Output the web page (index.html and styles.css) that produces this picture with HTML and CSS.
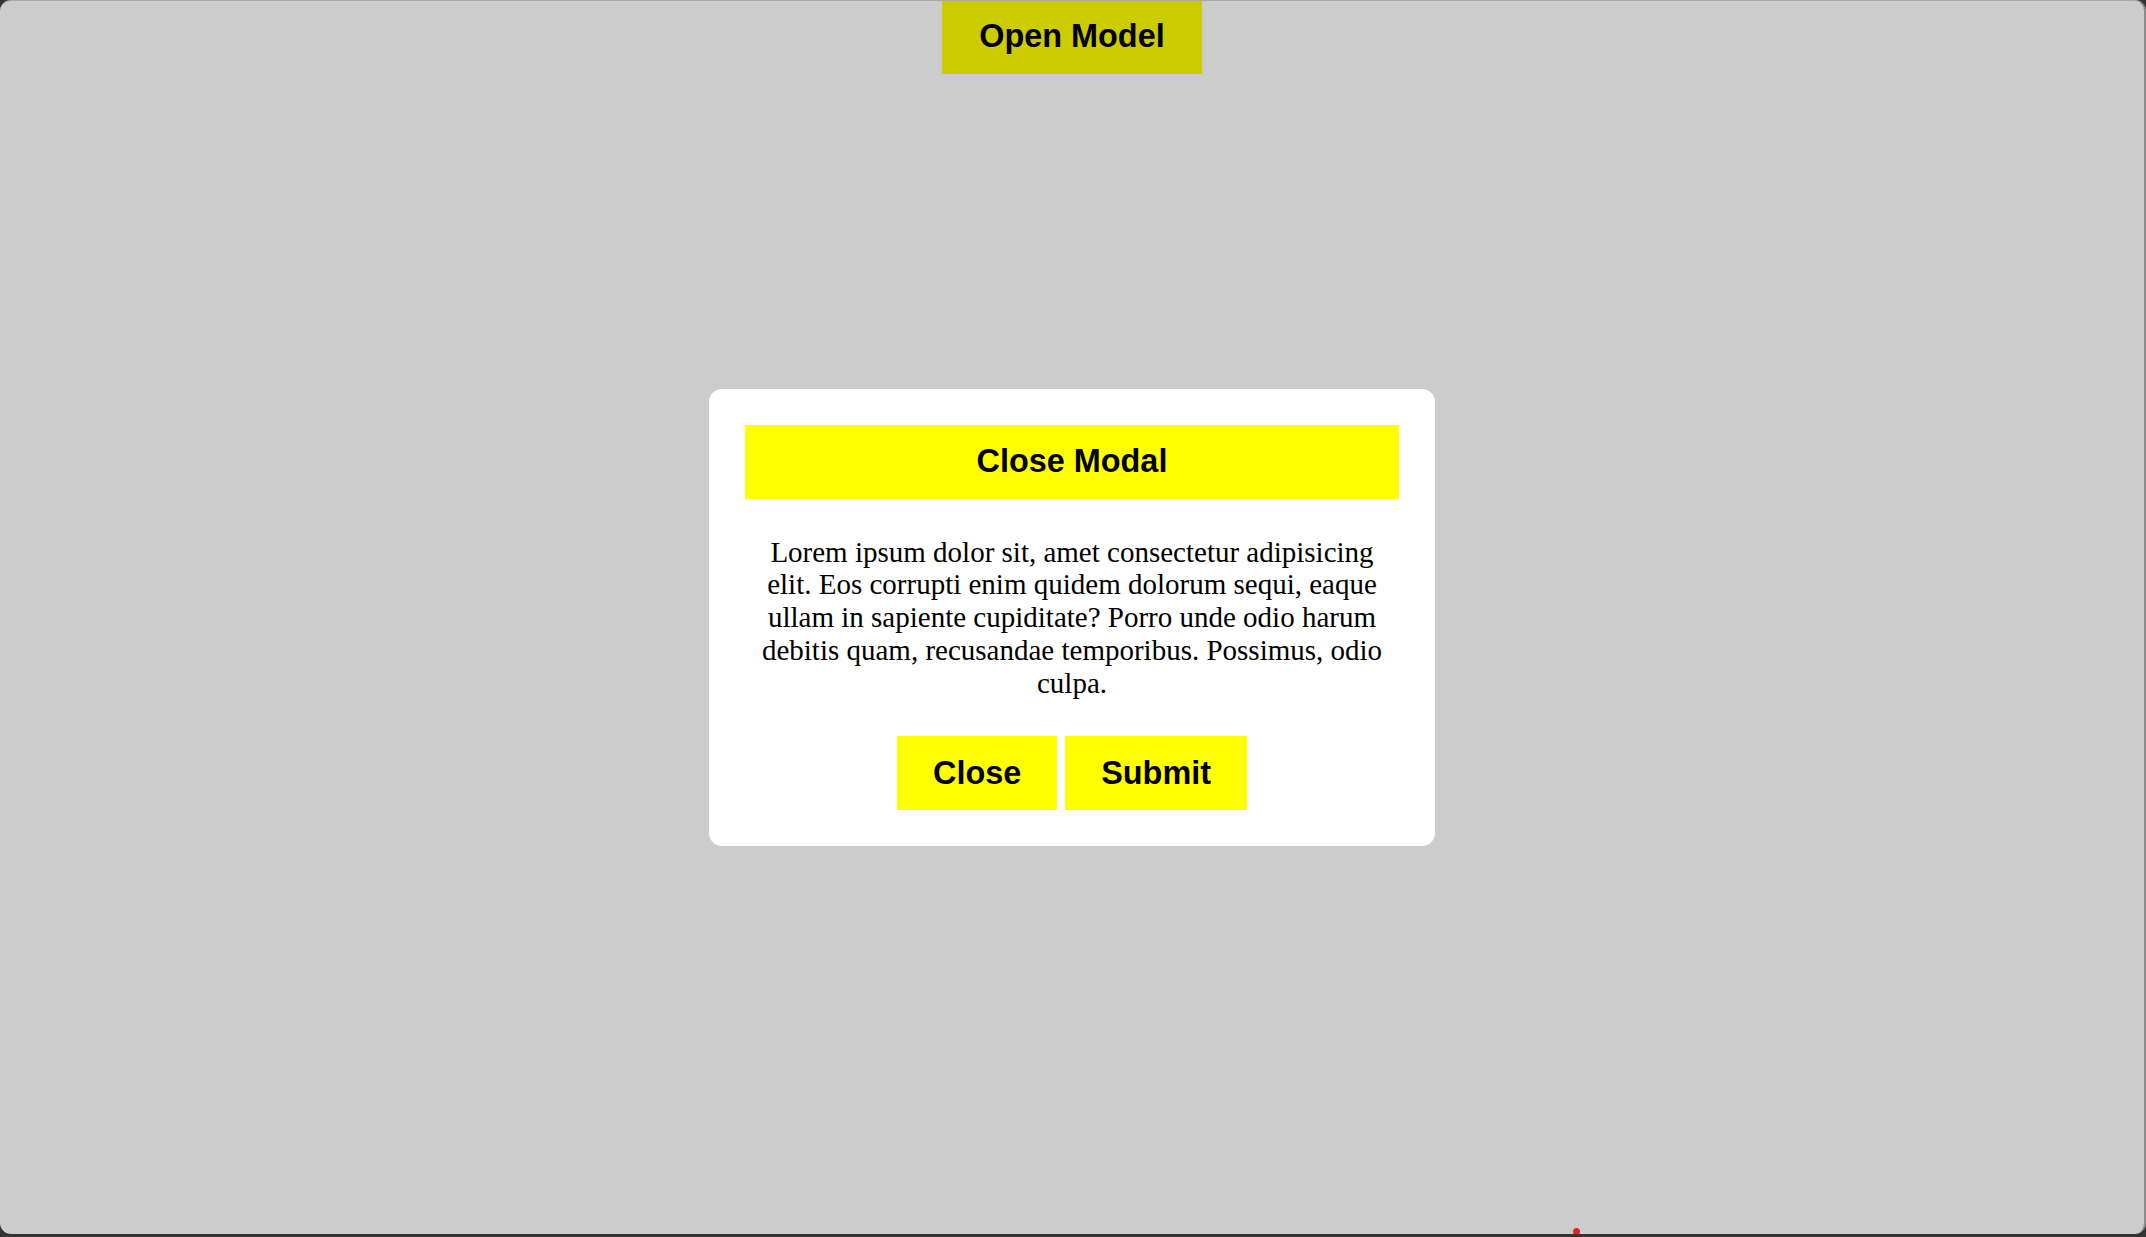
FILE: index.html
```html
<!DOCTYPE html>
<html lang="en">
<head>
<meta charset="utf-8">
<title>Modal</title>
<link rel="stylesheet" href="styles.css">
</head>
<body>
<div class="stage">
  <header class="topbar">
    <button class="btn btn-open" type="button">Open Model</button>
  </header>
  <div class="overlay">
    <div class="modal">
      <div class="modal-title">Close Modal</div>
      <p class="modal-text">Lorem ipsum dolor sit, amet consectetur adipisicing elit. Eos corrupti enim quidem dolorum sequi, eaque ullam in sapiente cupiditate? Porro unde odio harum debitis quam, recusandae temporibus. Possimus, odio culpa.</p>
      <div class="modal-actions">
        <button class="btn" type="button">Close</button>
        <button class="btn" type="button">Submit</button>
      </div>
    </div>
  </div>
  <span class="dot"></span>
</div>
</body>
</html>
```
FILE: styles.css
```css
html {
  margin: 0;
  background: #333333;
}
body {
  margin: 0;
  height: 1237px;
  overflow: hidden;
}
.stage {
  position: relative;
  box-sizing: border-box;
  height: 1234px;
  background: #cccccc;
  border-top: 1px solid #a9a9a9;
  border-right: 2px solid #8c8c8c;
  border-radius: 11px;
  overflow: hidden;
}
.topbar {
  display: flex;
  justify-content: center;
}
.btn {
  font-family: "Liberation Sans", Arial, sans-serif;
  font-weight: bold;
  font-size: 32.4px;
  color: #000;
  background: #ffff00;
  border: none;
  height: 74px;
  padding: 0 36px;
  margin: 0;
  line-height: 74px;
  cursor: pointer;
}
.btn-open {
  background: #cccc00;
  height: 73px;
  width: 260px;
  padding: 0 0 3px;
  line-height: 70px;
}
.overlay {
  position: absolute;
  inset: 0;
  display: flex;
  align-items: center;
  justify-content: center;
}
.modal {
  box-sizing: border-box;
  width: 726px;
  padding: 36px;
  background: #ffffff;
  border-radius: 13px;
  display: flex;
  flex-direction: column;
  align-items: stretch;
}
.modal-title {
  box-sizing: border-box;
  height: 74px;
  padding-bottom: 2px;
  background: #ffff00;
  font-family: "Liberation Sans", Arial, sans-serif;
  font-weight: bold;
  font-size: 32.4px;
  line-height: 72px;
  text-align: center;
  color: #000;
}
.modal-text {
  margin: 37px 0;
  padding: 0 8px;
  font-family: "Liberation Serif", "Times New Roman", serif;
  font-size: 29px;
  line-height: 32.8px;
  text-align: center;
  color: #000;
}
.modal-actions {
  display: flex;
  justify-content: center;
  gap: 8px;
}
.dot {
  position: absolute;
  left: 1573px;
  top: 1227px;
  width: 7px;
  height: 7px;
  border-radius: 50%;
  background: #e52222;
}
```
